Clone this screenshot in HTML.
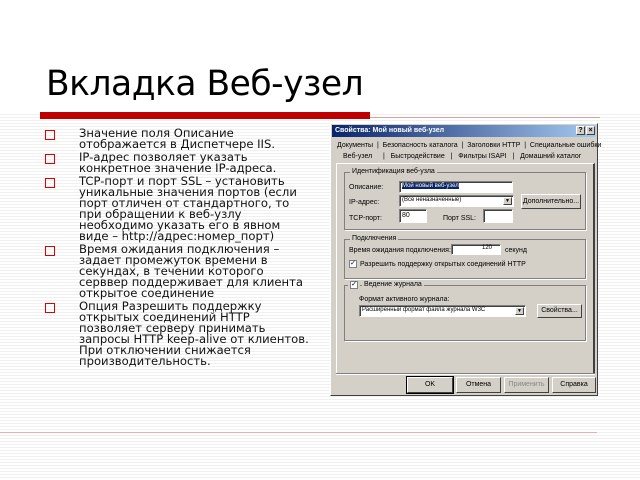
<!DOCTYPE html>
<html><head><meta charset="utf-8"><style>
*{margin:0;padding:0;box-sizing:border-box}
body{width:640px;height:480px;position:relative;background:#fff;overflow:hidden;font-family:"Liberation Sans","DejaVu Sans",sans-serif}
.stripes{position:absolute;left:0;top:112px;width:640px;height:368px;background:repeating-linear-gradient(#fff 0 2px,#f0f0f0 2px 3px)}
h1{position:absolute;left:46px;top:64px;font-weight:normal;font-size:34.5px;color:#000;font-family:"DejaVu Sans",sans-serif;letter-spacing:-0.5px}
.bar{position:absolute;left:40px;top:112px;width:330px;height:7px;background:#c00000}
.thin{position:absolute;left:370px;top:117px;width:230px;height:1px;background:#e0a0a0}
.thin2{position:absolute;left:0;top:432px;width:597px;height:1px;background:#e8b0b0}
ul{position:absolute;left:40px;top:128px;width:290px;list-style:none;font-family:"DejaVu Sans",sans-serif;font-size:11.6px;line-height:11px;color:#111;white-space:nowrap}
li{position:relative;padding-left:39px;margin-bottom:2px}
li:before{content:"";position:absolute;left:5px;top:2px;width:8px;height:8px;border:1.5px solid #e00000}
.dlg{position:absolute;left:330px;top:123px;width:268px;height:273px;background:#d4d0c8;border:1px solid #fff;border-right-color:#404040;border-bottom-color:#404040;font-size:7px;color:#000}
.tb{position:absolute;left:1px;top:1px;right:1px;height:12px;background:linear-gradient(90deg,#0a246a,#a6caf0);color:#fff;font-size:7px;font-weight:bold;padding:2px 3px}
.tbtn{position:absolute;top:1px;width:9px;height:9px;background:#d4d0c8;border:1px solid #fff;border-right-color:#404040;border-bottom-color:#404040;font-size:7px;color:#000;text-align:center;line-height:7px}
.a{position:absolute;white-space:nowrap}
.inp{position:absolute;background:#fff;border:1px solid #808080;border-right-color:#fff;border-bottom-color:#fff;box-shadow:inset 1px 1px #404040}
.btn{position:absolute;background:#d4d0c8;border:1px solid #fff;border-right-color:#404040;border-bottom-color:#404040;text-align:center;font-size:7px}
.grp{position:absolute;border:1px solid #808080;box-shadow:1px 1px #fff}
.gl{position:absolute;top:-5px;left:5px;background:#d4d0c8;padding:0 2px}
.chk{position:absolute;width:8px;height:8px;background:#fff;border:1px solid #808080;font-size:7px;line-height:6px;text-align:center}
.dd{position:absolute;right:1px;top:1px;width:9px;bottom:1px;background:#d4d0c8;border:1px solid #fff;border-right-color:#404040;border-bottom-color:#404040;font-size:5px;text-align:center;line-height:7px}
</style></head><body>
<div class="stripes"></div>
<h1>Вкладка Веб-узел</h1>
<div class="bar"></div><div class="thin"></div><div class="thin2"></div>
<ul>
<li>Значение поля Описание<br>отображается в Диспетчере IIS.</li>
<li>IP-адрес позволяет указать<br>конкретное значение IP-адреса.</li>
<li>TCP-порт и порт SSL – установить<br>уникальные значения портов (если<br>порт отличен от стандартного, то<br>при обращении к веб-узлу<br>необходимо указать его в явном<br>виде – http://адрес:номер_порт)</li>
<li>Время ожидания подключения –<br>задает промежуток времени в<br>секундах, в течении которого<br>серввер поддерживает для клиента<br>открытое соединение</li>
<li>Опция Разрешить поддержку<br>открытых соединений HTTP<br>позволяет серверу принимать<br>запросы HTTP keep-alive от клиентов.<br>При отключении снижается<br>производительность.</li>
</ul>
<div class="dlg">
<div class="tb">Свойства: Мой новый веб-узел<div class="tbtn" style="right:11px">?</div><div class="tbtn" style="right:1px">×</div></div>
<div class="a" style="left:6px;top:18px">Документы &nbsp;|&nbsp; Безопасность каталога &nbsp;|&nbsp; Заголовки HTTP &nbsp;|&nbsp; Специальные ошибки</div>
<div class="a" style="left:12px;top:29px">Веб-узел</div>
<div class="a" style="left:52px;top:29px">| &nbsp; Быстродействие &nbsp; | &nbsp; Фильтры ISAPI &nbsp; | &nbsp; Домашний каталог</div>
<div style="position:absolute;left:5px;top:39px;width:259px;height:210px;border:1px solid #fff;border-right:2px solid #404040;border-bottom:none"></div>
<div class="grp" style="left:13px;top:48px;width:242px;height:58px"><span class="gl">Идентификация веб-узла</span></div>
<div class="a" style="left:18px;top:60px">Описание:</div>
<div class="inp" style="left:68px;top:57px;width:114px;height:12px"><span style="background:#0a246a;color:#fff;font-size:6px;margin:2px">Мой новый веб-узел</span></div>
<div class="a" style="left:18px;top:75px">IP-адрес:</div>
<div class="inp" style="left:68px;top:71px;width:115px;height:12px;font-size:6px;padding:1px 2px">(Все неназначенные)<div class="dd">▼</div></div>
<div class="btn" style="left:190px;top:70px;width:60px;height:15px;line-height:13px">Дополнительно...</div>
<div class="a" style="left:18px;top:91px">TCP-порт:</div>
<div class="inp" style="left:68px;top:85px;width:28px;height:14px;padding:2px">80</div>
<div class="a" style="left:112px;top:91px">Порт SSL:</div>
<div class="inp" style="left:152px;top:85px;width:30px;height:14px"></div>
<div class="grp" style="left:13px;top:115px;width:242px;height:40px"><span class="gl">Подключения</span></div>
<div class="a" style="left:18px;top:123px">Время ожидания подключения:</div>
<div class="inp" style="left:120px;top:120px;width:50px;height:11px;text-align:right;padding-right:8px;font-size:6px">120</div>
<div class="a" style="left:174px;top:123px">секунд</div>
<div class="chk" style="left:18px;top:136px">✓</div>
<div class="a" style="left:29px;top:137px">Разрешить поддержку открытых соединений HTTP</div>
<div class="grp" style="left:13px;top:161px;width:242px;height:56px"></div>
<div class="chk" style="left:19px;top:157px;box-shadow:-2px 0 #d4d0c8,2px 0 #d4d0c8">✓</div>
<div class="a" style="left:31px;top:157px;background:#d4d0c8;padding:0 2px">Ведение журнала</div>
<div class="a" style="left:28px;top:172px">Формат активного журнала:</div>
<div class="inp" style="left:28px;top:181px;width:167px;height:12px;font-size:6px;padding:1px 2px">Расширенный формат файла журнала W3C<div class="dd">▼</div></div>
<div class="btn" style="left:206px;top:180px;width:45px;height:14px;line-height:12px">Свойства...</div>
<div style="position:absolute;left:5px;top:249px;width:259px;height:1px;background:#808080;box-shadow:0 1px #fff"></div>
<div class="btn" style="left:76px;top:253px;width:46px;height:16px;line-height:14px;outline:1px solid #000">OK</div>
<div class="btn" style="left:125px;top:253px;width:45px;height:16px;line-height:14px">Отмена</div>
<div class="btn" style="left:173px;top:253px;width:45px;height:16px;line-height:14px;color:#888">Применить</div>
<div class="btn" style="left:221px;top:253px;width:44px;height:16px;line-height:14px">Справка</div>
</div>
</body></html>
